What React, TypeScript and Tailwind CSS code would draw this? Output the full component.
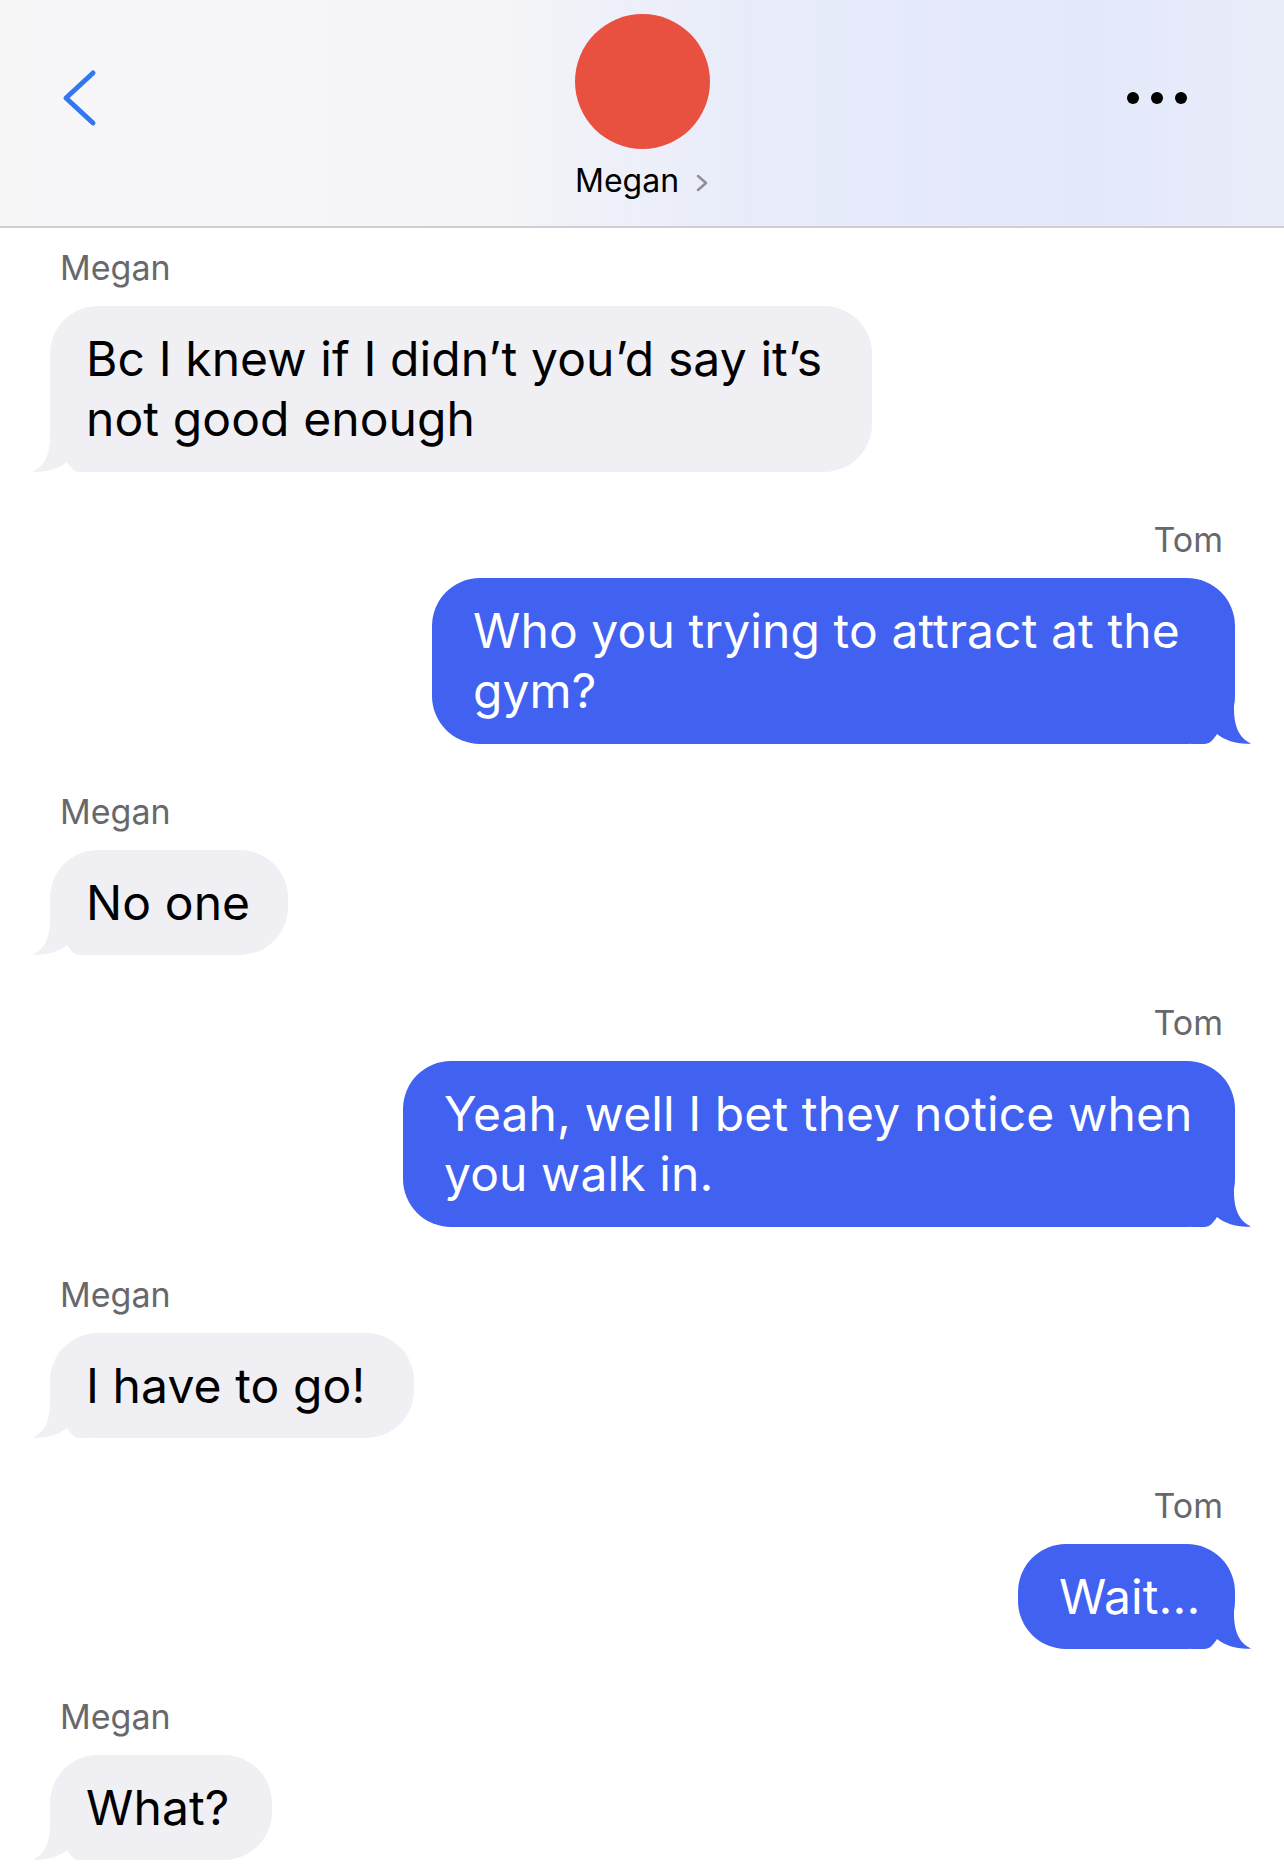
import React from 'react';

type Msg = {
  from: 'Megan' | 'Tom';
  lines: string[];
  width: number;
};

const messages: Msg[] = [
  { from: 'Megan', lines: ['Bc I knew if I didn’t you’d say it’s', 'not good enough'], width: 822 },
  { from: 'Tom', lines: ['Who you trying to attract at the', 'gym?'], width: 803 },
  { from: 'Megan', lines: ['No one'], width: 238 },
  { from: 'Tom', lines: ['Yeah, well I bet they notice when', 'you walk in.'], width: 832 },
  { from: 'Megan', lines: ['I have to go!'], width: 364 },
  { from: 'Tom', lines: ['Wait...'], width: 217 },
  { from: 'Megan', lines: ['What?'], width: 222 },
];

function Tail({ color, flip }: { color: string; flip?: boolean }) {
  return (
    <svg
      width="60"
      height="60"
      viewBox="0 0 60 60"
      className={
        flip
          ? 'absolute bottom-0 right-[-16px] -scale-x-100'
          : 'absolute bottom-0 left-[-17px]'
      }
      aria-hidden
    >
      <path
        d="M17 0 L17 25 C17 45 10 55 0 59.5 C13 60.5 25 57 34 50 C38 56 41 60 47 60 L60 60 L60 0 Z"
        fill={color}
      />
    </svg>
  );
}

function Bubble({ msg, first }: { msg: Msg; first: boolean }) {
  const mine = msg.from === 'Tom';
  const two = msg.lines.length > 1;
  return (
    <div className={`flex flex-col ${mine ? 'items-end pr-[49px]' : 'items-start pl-[50px]'} ${first ? 'mt-[20px]' : 'mt-[48px]'}`}>
      <div
        className={`h-[40px] text-[34px] leading-[40px] text-[#68686c] ${mine ? 'pr-[12px]' : 'pl-[10px]'}`}
      >
        {msg.from}
      </div>
      <div
        className={`relative mt-[18px] rounded-[48px] text-[48px] leading-[60px] whitespace-nowrap tracking-[0.1px] ${
          mine
            ? 'bg-[#4161f0] pl-[41px] text-white'
            : 'bg-[#efeff4] pl-[36px] text-black'
        } ${two ? 'py-[23px]' : 'py-[22.5px]'}`}
        style={{ width: msg.width }}
      >
        <Tail color={mine ? '#4161f0' : '#efeff4'} flip={mine} />
        <div className="relative">
          {msg.lines.map((l, i) => (
            <div key={i}>{l}</div>
          ))}
        </div>
      </div>
    </div>
  );
}

export default function App() {
  return (
    <div
      className="min-h-[1867px] w-full bg-white"
      style={{ fontFamily: 'Inter, "Noto Sans", sans-serif' }}
    >
      <header className="relative grid h-[228px] grid-cols-[1fr_auto_1fr] border-b-2 border-[#cfcfd3] bg-[linear-gradient(90deg,#f7f7f8_0%,#f5f5f8_38%,#e8ecfa_58%,#e3e8fb_85%,#eaedf9_100%)]">
        <div className="flex items-start pl-[60px] pt-[68px]">
          <svg width="40" height="60" viewBox="0 0 40 60" aria-hidden>
            <path
              d="M33 5 L6 30 L33 55"
              fill="none"
              stroke="#3178f0"
              strokeWidth="5"
              strokeLinecap="round"
              strokeLinejoin="round"
            />
          </svg>
        </div>
        <div className="flex flex-col items-center pt-[14px]">
          <div className="h-[135px] w-[135px] rounded-full bg-[#e85040]" />
          <div className="mt-[13px] flex items-center gap-[16px]">
            <span className="text-[32px] leading-[38px] text-black">Megan</span>
            <svg width="14" height="18" viewBox="0 0 14 18" className="mt-[4px]" aria-hidden>
              <path
                d="M3 2 L11 9 L3 16"
                fill="none"
                stroke="#8e8e93"
                strokeWidth="2.5"
                strokeLinecap="round"
                strokeLinejoin="round"
              />
            </svg>
          </div>
        </div>
        <div className="flex items-start justify-end pr-[92px] pt-[88px]">
          <svg width="70" height="20" viewBox="0 0 70 20" aria-hidden>
            <circle cx="11" cy="10" r="6" fill="#000" />
            <circle cx="35" cy="10" r="6" fill="#000" />
            <circle cx="59" cy="10" r="6" fill="#000" />
          </svg>
        </div>
      </header>

      <main className="flex flex-col">
        {messages.map((m, i) => (
          <Bubble key={i} msg={m} first={i === 0} />
        ))}
      </main>
    </div>
  );
}
